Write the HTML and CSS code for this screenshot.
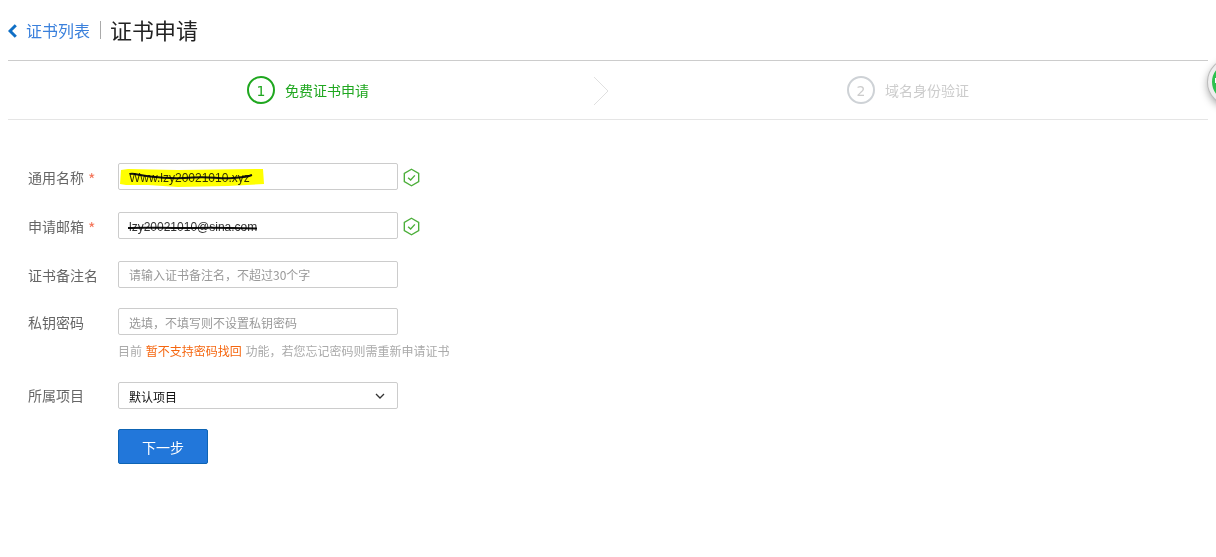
FILE: index.html
```html
<!DOCTYPE html>
<html lang="zh-CN">
<head>
<meta charset="utf-8">
<title>证书申请</title>
<link rel="stylesheet" href="styles.css">
</head>
<body>
<header class="page-head">
  <a class="back" href="#">
    <svg class="back-icon" width="9" height="14" viewBox="0 0 9 14"><path d="M7.800 1.200 2 7l5.800 5.800" fill="none" stroke="#0f6fc6" stroke-width="3"/></svg>
    <span>证书列表</span>
  </a>
  <h1 class="title">证书申请</h1>
</header>

<nav class="steps">
  <div class="step step-active">
    <span class="step-num">1</span><span class="step-text">免费证书申请</span>
    <svg class="step-arrow" width="16" height="30" viewBox="0 0 16 30"><path d="M1 1l14 14L1 29" fill="none" stroke="#e0e0e0"/></svg>
  </div>
  <div class="step">
    <span class="step-num">2</span><span class="step-text">域名身份验证</span>
  </div>
</nav>

<form class="form">
  <div class="row row-a">
    <label class="label">通用名称<i class="star">*</i></label>
    <div class="field">
      <input class="input" value="Www.lzy20021010.xyz">
      <svg class="mark" width="160" height="27" viewBox="0 0 160 27">
        <path class="hl" d="M3 7 10 6 60 7 145 6 146 21 110 23 60 24 30 22 8 22 2 21Z"/>
        <path class="scrawl" d="M12 11C16 10 20 12 32 13.500S58 16 75 14.500 100 16 115 15 128 14 134 12"/>
      </svg>
    </div>
    <svg class="ok" width="17" height="19" viewBox="0 0 16 18"><path d="M8 1.2 14.800 5v8L8 16.800 1.200 13V5Z" fill="none" stroke="#4caf3a" stroke-width="1.300"/><path d="M4.800 9.200 7.200 11.400 11.200 7" fill="none" stroke="#4caf3a" stroke-width="1.300"/></svg>
  </div>
  <div class="row row-a">
    <label class="label">申请邮箱<i class="star">*</i></label>
    <div class="field">
      <input class="input" value="lzy20021010@sina.com">
      <svg class="mark" width="160" height="27" viewBox="0 0 160 27">
        <path class="scrawl" d="M10 16C30 15 50 16.500 75 16S120 16 139 16.500"/>
      </svg>
    </div>
    <svg class="ok" width="17" height="19" viewBox="0 0 16 18"><path d="M8 1.2 14.800 5v8L8 16.800 1.200 13V5Z" fill="none" stroke="#4caf3a" stroke-width="1.300"/><path d="M4.800 9.200 7.200 11.400 11.200 7" fill="none" stroke="#4caf3a" stroke-width="1.300"/></svg>
  </div>
  <div class="row row-b">
    <label class="label">证书备注名</label>
    <div class="field"><input class="input" placeholder="请输入证书备注名，不超过30个字"></div>
  </div>
  <div class="row row-d">
    <label class="label">私钥密码</label>
    <div class="field"><input class="input" placeholder="选填，不填写则不设置私钥密码"></div>
  </div>
  <p class="hint">目前 <strong class="warn">暂不支持密码找回</strong> 功能，若您忘记密码则需重新申请证书</p>
  <div class="row row-c">
    <label class="label">所属项目</label>
    <div class="field">
      <div class="select">默认项目<svg class="caret" width="10" height="6" viewBox="0 0 10 6"><path d="M1 1l4 4 4-4" fill="none" stroke="#333" stroke-width="1.300"/></svg></div>
    </div>
  </div>
  <button class="next" type="button">下一步</button>
</form>

<div class="float-ball" aria-hidden="true"><span class="float-tick"></span></div>
</body>
</html>
```
FILE: styles.css
```css
* { box-sizing: border-box; }
html, body { margin: 0; height: 100%; overflow: hidden; }
body {
  position: relative;
  padding: 0 8px;
  background: #fff;
  font-family: "Noto Sans CJK SC", "Liberation Sans", sans-serif;
  color: #333;
}
.page-head {
  display: flex;
  align-items: center;
  height: 61px;
  padding-bottom: 1px;
  border-bottom: 1px solid #ccc;
}
.back {
  display: flex;
  align-items: center;
  height: 18px;
  padding-right: 10px;
  border-right: 1px solid #aaa;
  color: #3a80dc;
  font-size: 16px;
  text-decoration: none;
}
.back-icon { margin: 2px 9px 0 0; }
.title {
  margin: 0 0 2px 9px;
  font-size: 22px;
  font-weight: 400;
  color: #222;
  line-height: 30px;
}
.steps {
  display: flex;
  height: 59px;
  border-bottom: 1px solid #e5e5e5;
}
.step {
  position: relative;
  flex: 1;
  display: flex;
  align-items: center;
  justify-content: center;
  color: #ccc;
  font-size: 14px;
}
.step-num {
  display: flex;
  align-items: center;
  justify-content: center;
  width: 28px;
  height: 28px;
  margin-right: 10px;
  padding-top: 2px;
  border: 2px solid #ced2d6;
  border-radius: 50%;
  font-size: 14px;
  font-family: "DejaVu Sans", sans-serif;
}
.step-active { color: #1fa71f; }
.step-active .step-num { border-color: #1fa71f; }
.step-text { line-height: 20px; }
.step-arrow { position: absolute; right: -1px; top: 15px; }
.form { padding: 43px 0 0 20px; }
.row {
  display: flex;
  align-items: center;
  height: 27px;
}
.row-a { margin-bottom: 22px; }
.row-b { margin-bottom: 20px; }
.row-c { margin-bottom: 20px; }
.label {
  align-self: flex-start;
  width: 90px;
  height: 27px;
  color: #666;
  font-size: 14px;
  line-height: 29px;
}
.row-c .label { line-height: 27px; }
.star {
  margin-left: 4px;
  color: #f4775c;
  font-style: normal;
  font-size: 16px;
  line-height: 0;
  vertical-align: -3px;
}
.field {
  position: relative;
  width: 280px;
  height: 27px;
}
.input {
  display: block;
  width: 100%;
  height: 27px;
  padding: 2px 10px 0;
  border: 1px solid #ccc;
  border-radius: 2px;
  outline: 0;
  background: #fff;
  color: #333;
  font-family: "Liberation Sans", "Noto Sans CJK SC", sans-serif;
  font-size: 12px;
}
.row-d .input { padding-top: 4px; }
.input::placeholder {
  color: #999;
  font-family: "Noto Sans CJK SC", sans-serif;
}
.mark {
  position: absolute;
  left: 0;
  top: 0;
  mix-blend-mode: multiply;
  pointer-events: none;
}
.hl { fill: #ffff00; }
.scrawl { fill: none; stroke: #111; stroke-width: 2; }
.ok { margin: 1px 0 0 5px; }
.hint {
  margin: 7px 0 0 90px;
  height: 40px;
  color: #aaa;
  font-size: 12px;
  line-height: 17px;
  word-spacing: 1px;
}
.warn { color: #f5660f; font-weight: 400; }
.select {
  display: flex;
  align-items: center;
  justify-content: space-between;
  height: 27px;
  padding: 1px 12px 0 10px;
  border: 1px solid #ccc;
  border-radius: 2px;
  color: #111;
  font-size: 12px;
}
.next {
  display: block;
  width: 90px;
  height: 35px;
  margin-left: 90px;
  border: 1px solid #0e64b4;
  border-radius: 2px;
  background: #2277da;
  color: #fff;
  font-family: inherit;
  font-size: 14px;
}
.float-ball {
  position: absolute;
  left: 1208px;
  top: 59px;
  width: 46px;
  height: 46px;
  border: 4px solid #eee;
  border-radius: 50%;
  background: #2ec24f;
  box-shadow: 0 0 0 1px #bbb, 0 3px 8px rgba(0, 0, 0, .4);
}
.float-tick {
  position: absolute;
  left: 3px;
  top: 15px;
  width: 3px;
  height: 5px;
  background: #fff;
}
```
